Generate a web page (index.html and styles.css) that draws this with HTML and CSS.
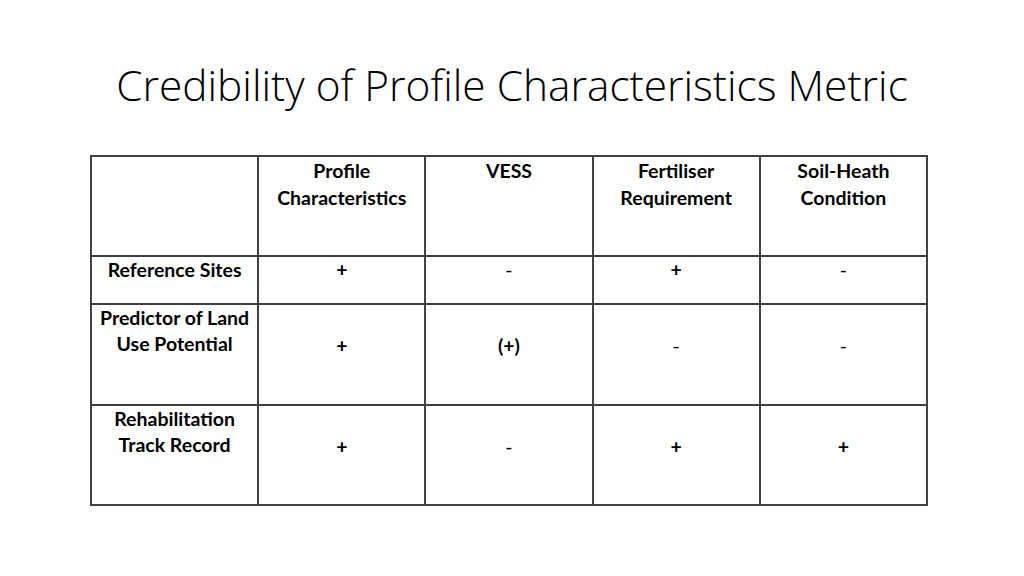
FILE: index.html
```html
<!DOCTYPE html>
<html>
<head>
<meta charset="utf-8">
<link rel="stylesheet" href="styles.css">
</head>
<body>
<div class="slide">
  <h1 class="title">Credibility of Profile Characteristics Metric</h1>
  <table class="grid">
    <tr class="row-head">
      <th></th>
      <th>Profile<br>Characteristics</th>
      <th>VESS</th>
      <th>Fertiliser<br>Requirement</th>
      <th>Soil-Heath<br>Condition</th>
    </tr>
    <tr class="row-short">
      <th>Reference Sites</th>
      <td class="plus">+</td>
      <td class="minus">-</td>
      <td class="plus">+</td>
      <td class="minus">-</td>
    </tr>
    <tr class="row-tall">
      <th>Predictor of Land<br>Use Potential</th>
      <td class="plus second">+</td>
      <td class="plus second">(+)</td>
      <td class="minus second">-</td>
      <td class="minus second">-</td>
    </tr>
    <tr class="row-last">
      <th>Rehabilitation<br>Track Record</th>
      <td class="plus second">+</td>
      <td class="minus second">-</td>
      <td class="plus second">+</td>
      <td class="plus second">+</td>
    </tr>
  </table>
</div>
</body>
</html>
```
FILE: styles.css
```css
html, body {
  margin: 0;
  padding: 0;
  background: #ffffff;
}
.slide {
  width: 1024px;
  height: 576px;
  display: flex;
  flex-direction: column;
  align-items: center;
  color: #000;
}
.title {
  margin: 56px 0 0 0;
  height: 99px;
  font-family: "Open Sans", "Liberation Sans", sans-serif;
  font-weight: 300;
  font-size: 42.4px;
  line-height: 58px;
  white-space: nowrap;
}
.grid {
  align-self: flex-start;
  margin-left: 90px;
  border-collapse: collapse;
  table-layout: fixed;
  width: 838px;
  font-family: "Lato", "Liberation Sans", sans-serif;
  font-size: 19.5px;
  line-height: 26px;
}
.grid th, .grid td {
  border: 2px solid #404040;
  padding: 0;
  text-align: center;
  vertical-align: top;
  font-weight: 700;
  box-sizing: border-box;
}
.row-head { height: 100px; }
.row-head th { line-height: 27px; }
.row-short { height: 48px; }
.row-tall { height: 101px; }
.row-last { height: 100px; }
.grid td.second { padding-top: 28px; }
.grid td.minus { font-weight: 400; }
```
